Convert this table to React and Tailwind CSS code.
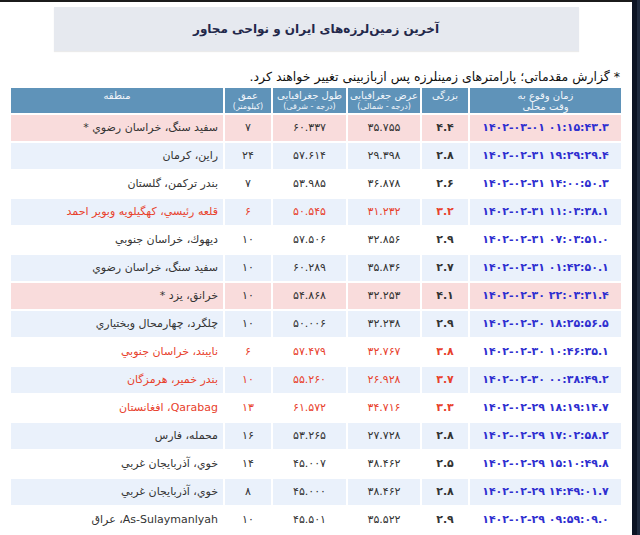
import React from 'react';

const fa = (s) => String(s).replace(/[0-9]/g, (d) => '۰۱۲۳۴۵۶۷۸۹'[d]);

// kind: pink = felt/important, red = highlighted magnitude
const quakes = [
  { t: '1402-03-01 01:15:43.3', m: '4.4', lat: '35.755', lon: '60.337', d: '7', loc: 'سفید سنگ، خراسان رضوي *', kind: 'pink' },
  { t: '1402-02-31 19:29:29.4', m: '2.8', lat: '29.398', lon: '57.614', d: '24', loc: 'راين، كرمان' },
  { t: '1402-02-31 14:00:50.3', m: '2.6', lat: '36.878', lon: '53.985', d: '7', loc: 'بندر تركمن، گلستان' },
  { t: '1402-02-31 11:03:38.1', m: '3.2', lat: '31.232', lon: '50.545', d: '6', loc: 'قلعه رئيسي، كهگيلويه وبوير احمد', kind: 'red' },
  { t: '1402-02-31 07:03:51.0', m: '2.9', lat: '32.856', lon: '57.506', d: '10', loc: 'ديهوك، خراسان جنوبي' },
  { t: '1402-02-31 01:42:50.1', m: '2.7', lat: '35.836', lon: '60.289', d: '10', loc: 'سفید سنگ، خراسان رضوي' },
  { t: '1402-02-30 22:03:31.4', m: '4.1', lat: '32.253', lon: '54.868', d: '10', loc: 'خرانق، يزد *', kind: 'pink' },
  { t: '1402-02-30 18:25:56.5', m: '2.9', lat: '32.238', lon: '50.006', d: '10', loc: 'چلگرد، چهارمحال وبختياري' },
  { t: '1402-02-30 10:46:35.1', m: '3.8', lat: '32.767', lon: '57.479', d: '6', loc: 'نايبند، خراسان جنوبي', kind: 'red' },
  { t: '1402-02-30 00:38:49.2', m: '3.7', lat: '26.928', lon: '55.260', d: '10', loc: 'بندر خمير، هرمزگان', kind: 'red' },
  { t: '1402-02-29 18:19:14.7', m: '3.3', lat: '34.716', lon: '61.572', d: '13', loc: 'Qarabag، افغانستان', kind: 'red' },
  { t: '1402-02-29 17:02:58.2', m: '2.8', lat: '27.728', lon: '53.265', d: '16', loc: 'محمله، فارس' },
  { t: '1402-02-29 15:10:49.8', m: '2.5', lat: '38.462', lon: '45.007', d: '14', loc: 'خوي، آذربايجان غربي' },
  { t: '1402-02-29 14:49:01.7', m: '2.8', lat: '38.462', lon: '45.000', d: '8', loc: 'خوي، آذربايجان غربي' },
  { t: '1402-02-29 09:59:09.0', m: '2.9', lat: '35.522', lon: '45.501', d: '10', loc: 'As-Sulaymanlyah، عراق' },
];

const Head = ({ title, sub }) => (
  <th className="bg-[#5f93b9] text-[#f2f6fb] font-normal align-top pt-[2px] leading-[12px]">
    <div className="text-[10px]">{title}</div>
    {sub && <div className="text-[8px] leading-[10px]">{sub}</div>}
  </th>
);

export default function App() {
  return (
    <div className="flex h-[535px] overflow-hidden bg-white" style={{ fontFamily: '"DejaVu Sans", Tahoma, sans-serif' }}>
      <div className="flex-1 flex flex-col border-t-2 border-[#1b1b1b]" dir="rtl">
        <div className="mt-[5px] mx-auto w-[525px] h-[44px] bg-[#e6e9ef] shadow-[0_1px_1px_rgba(0,0,0,0.08)] flex items-center justify-center">
          <h1 className="text-[12px] font-bold text-[#23284a]">آخرین زمین‌لرزه‌های ایران و نواحی مجاور</h1>
        </div>

        <p className="mt-[18px] pr-[12px] text-[12.5px] leading-[16px] text-[#111]">
          * گزارش مقدماتی؛ پارامترهای زمینلرزه پس ازبازبینی تغییر خواهند کرد.
        </p>

        <table className="mt-[1px] mr-[9px] w-[614px] table-fixed border-separate border-spacing-[2px]">
          <colgroup>
            <col className="w-[151px]" />
            <col className="w-[46px]" />
            <col className="w-[72px]" />
            <col className="w-[73px]" />
            <col className="w-[46px]" />
            <col className="w-[212px]" />
          </colgroup>
          <thead>
            <tr className="h-[25px]">
              <Head title="زمان وقوع به" sub={<span className="text-[10px]">وقت محلی</span>} />
              <Head title="بزرگی" />
              <Head title="عرض جغرافیایی" sub="(درجه - شمالی)" />
              <Head title="طول جغرافیایی" sub="(درجه - شرقی)" />
              <Head title="عمق" sub="(کیلومتر)" />
              <Head title="منطقه" />
            </tr>
          </thead>
          <tbody>
            {quakes.map((q, i) => {
              const bg = q.kind === 'pink' ? 'bg-[#f9dcdc]' : i % 2 === 1 ? 'bg-[#eaf1fb]' : 'bg-white';
              const txt = q.kind === 'red' ? 'text-[#e8412c]' : 'text-[#333]';
              return (
                <tr key={i} className={`h-[26px] ${bg}`}>
                  <td className="text-center text-[11px] font-bold text-[#2f2fd0] tracking-[0.3px]">
                    <span dir="ltr">{fa(q.t)}</span>
                  </td>
                  <td className={`text-center text-[11px] font-bold ${q.kind === 'red' ? 'text-[#e8412c]' : 'text-[#333]'}`}>{fa(q.m)}</td>
                  <td className={`text-center text-[11px] ${txt}`}>{fa(q.lat)}</td>
                  <td className={`text-center text-[11px] ${txt}`}>{fa(q.lon)}</td>
                  <td className={`text-center text-[11px] ${txt}`}>{fa(q.d)}</td>
                  <td className={`pr-[5px] text-right text-[11px] ${txt}`}>{q.loc}</td>
                </tr>
              );
            })}
          </tbody>
        </table>
      </div>
      <div className="w-[5px] bg-[#0c1424]" />
      <div className="w-[3px] bg-[#1e2a3e]" />
    </div>
  );
}
